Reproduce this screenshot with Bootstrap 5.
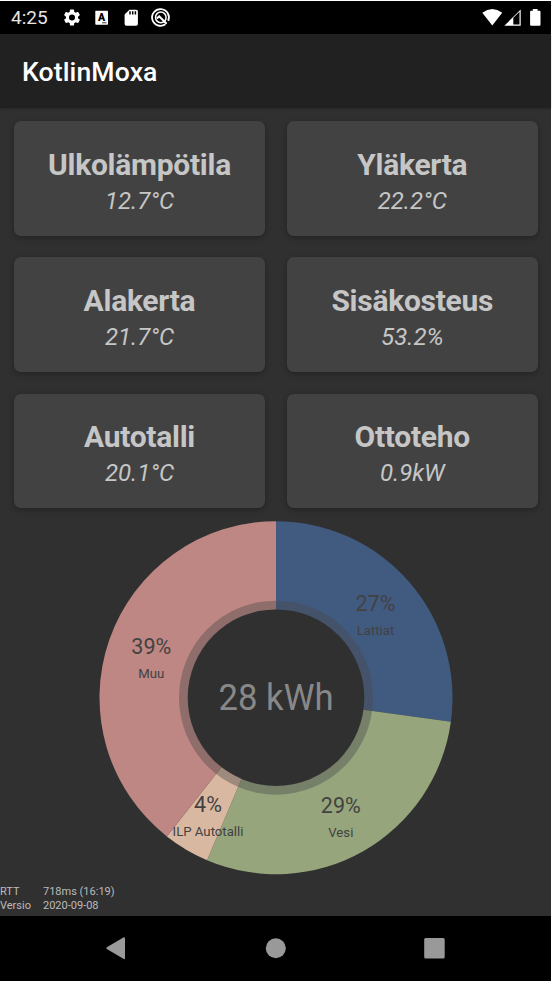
<!DOCTYPE html>
<html lang="fi">
<head>
<meta charset="utf-8">
<meta name="viewport" content="width=device-width, initial-scale=1">
<title>KotlinMoxa</title>
<link href="https://cdn.jsdelivr.net/npm/bootstrap@5.3.0/dist/css/bootstrap.min.css" rel="stylesheet">
<style>
  body { background: #fff; font-family: Roboto, sans-serif; overflow: hidden; }
  .screen { width: 551px; height: 980px; margin-top: 1px; background: #303030; }
  .status-bar { height: 33px; background: #000; color: #fff; padding-left: 11px; }
  .clock { font-size: 19px; line-height: 34px; width: 51px; color: #e6e6e6; }
  .app-bar { height: 74px; background: #212121; color: #fff; padding-left: 22px; box-shadow: 0 1px 2px rgba(0,0,0,.2); }
  .app-title { font-size: 26.6px; font-weight: 500; line-height: 76px; letter-spacing: .1px; }
  .tiles { display: grid; grid-template-columns: 251px 251px; grid-auto-rows: 114.8px; column-gap: 21.8px; row-gap: 21.4px; padding: 13.3px 0 0 14px; height: 401px; }
  .tile { background: #424242; color: #c6c6c6; border: 0; border-radius: 7px; box-shadow: 0 2px 6px rgba(0,0,0,.28); padding-top: 24.3px; }
  .tile-name { font-size: 30px; font-weight: 700; line-height: 38px; letter-spacing: -.28px; }
  .tile-value { font-size: 24px; font-style: italic; line-height: 34px; }
  .chart { height: 376px; }
  .chart text { text-anchor: middle; fill: #424242; }
  .chart .pct { font-size: 21.5px; }
  .chart .lbl { font-size: 13.2px; }
  .chart .total { font-size: 36px; fill: #888; }
  .info { font-size: 11px; line-height: 13.5px; color: #bbb; grid-template-columns: 43px auto; }
  .nav-bar { height: 65px; background: #000; }
</style>
</head>
<body>
<div class="screen d-flex flex-column">
  <header class="status-bar d-flex flex-shrink-0">
    <span class="clock">4:25</span>
    <svg width="489" height="33" viewBox="62 1 489 33" fill="#fff">
      <g transform="translate(61.9 7.4) scale(.84)"><path d="M19.14 12.94c.04-.3.06-.61.06-.94s-.02-.64-.07-.94l2.03-1.58a.5.5 0 0 0 .12-.61l-1.92-3.32a.5.5 0 0 0-.59-.22l-2.39.96a7 7 0 0 0-1.62-.94l-.36-2.54a.5.5 0 0 0-.48-.41h-3.84a.5.5 0 0 0-.47.41l-.36 2.54a7.300 7.300 0 0 0-1.620.94l-2.390-.960a.5.5 0 0 0-.590.220L2.740 8.870a.5.5 0 0 0 .120.610l2.030 1.580a6 6 0 0 0 0 1.880l-2.030 1.580a.5.5 0 0 0-.120.610l1.920 3.320c.120.220.370.290.590.220l2.390-.960c.5.380 1.030.7 1.620.940l.360 2.540c.050.240.240.410.480.410h3.840c.240 0 .440-.170.470-.410l.360-2.540a7 7 0 0 0 1.620-.940l2.390.960c.220.080.470 0 .590-.220l1.920-3.320a.5.5 0 0 0-.120-.610zM12 15.600a3.600 3.600 0 1 1 0-7.200 3.600 3.600 0 0 1 0 7.200z"/></g>
      <rect x="95.300" y="10.800" width="12.700" height="14" rx=".8"/>
      <text x="101.600" y="20.700" text-anchor="middle" font-size="10.500" font-weight="900" fill="#000">A</text>
      <path d="M102 22.800h4.500" stroke="#000" stroke-width=".8"/>
      <path d="M129.400 9.700h6.800q1.700 0 1.700 1.700v12.700q0 1.700-1.700 1.700h-9.900q-1.700 0-1.700-1.700v-9.600z"/>
      <path d="M130 11.200v3.200M132.700 11.200v3.200M135.400 11.200v3.200" stroke="#000" stroke-width="1.500"/>
      <g fill="none" stroke="#fff">
        <path d="M165.400 24.300A8.400 8.400 0 1 1 168.200 20.800" stroke-width="1.800"/>
        <circle cx="160.800" cy="17.400" r="5.300" stroke-width="1.500"/>
        <path d="M156.800 18.400l2.400-2 7.400 7.400" stroke-width="2"/>
      </g>
      <path d="M482.300 12.800Q492.300 5.400 502.200 12.800L492.300 25.500z"/>
      <path fill-rule="evenodd" d="M504.300 25.800L520.700 9.500V25.800zM513.300 17.800V24.600H519.500V11.800z"/>
      <path d="M532.800 9.100h4.800v1.600h1.900q1 0 1 1V24.800q0 1-1 1h-8.400q-1 0-1-1V11.700q0-1 1-1h1.700z"/>
    </svg>
  </header>
  <div class="app-bar flex-shrink-0"><div class="app-title">KotlinMoxa</div></div>
  <main class="flex-grow-1 d-flex flex-column">
    <section class="tiles text-center">
      <div class="card tile"><div class="tile-name">Ulkolämpötila</div><div class="tile-value">12.7°C</div></div>
      <div class="card tile"><div class="tile-name">Yläkerta</div><div class="tile-value">22.2°C</div></div>
      <div class="card tile"><div class="tile-name">Alakerta</div><div class="tile-value">21.7°C</div></div>
      <div class="card tile"><div class="tile-name">Sisäkosteus</div><div class="tile-value">53.2%</div></div>
      <div class="card tile"><div class="tile-name">Autotalli</div><div class="tile-value">20.1°C</div></div>
      <div class="card tile"><div class="tile-name">Ottoteho</div><div class="tile-value">0.9kW</div></div>
    </section>
    <svg class="chart d-block flex-shrink-0" width="551" height="376" viewBox="0 509 551 376">
      <g transform="translate(276 697.700)">
        <path fill="#415a80" d="M0 0V-176.500A176.500 176.500 0 0 1 174.870 23.950z"/>
        <path fill="#96a57c" d="M0 0L174.870 23.950A176.500 176.500 0 0 1-68.960 162.470z"/>
        <path fill="#d9b8a1" d="M0 0L-68.960 162.470A176.500 176.500 0 0 1-109.150 138.700z"/>
        <path fill="#bf8784" d="M0 0L-109.150 138.700A176.500 176.500 0 0 1 0-176.500z"/>
        <circle r="97" fill="#4b4b4b" fill-opacity=".42"/>
        <circle r="88.300" fill="#303030"/>
      </g>
      <text class="pct" x="375.500" y="611">27%</text><text class="lbl" x="375.500" y="635.300">Lattiat</text>
      <text class="pct" x="340.800" y="813.300">29%</text><text class="lbl" x="340.800" y="837.300">Vesi</text>
      <text class="pct" x="208" y="811.500">4%</text><text class="lbl" x="208" y="835.500">ILP Autotalli</text>
      <text class="pct" x="151.300" y="654.400">39%</text><text class="lbl" x="151.300" y="678.400">Muu</text>
      <text class="total" x="276" y="709.800" textLength="115" lengthAdjust="spacingAndGlyphs">28 kWh</text>
    </svg>
    <div class="info d-grid"><span>RTT</span><span>718ms (16:19)</span><span>Versio</span><span>2020-09-08</span></div>
  </main>
  <nav class="nav-bar flex-shrink-0">
    <svg class="d-block" width="551" height="65" viewBox="0 916 551 65" fill="#999">
      <path d="M106.800 947.300L123.800 937.300Q125 937 125 938.300V958.200Q125 959.500 123.800 959L106.800 949Q105.600 948.200 106.800 947.300z"/>
      <circle cx="275.800" cy="948.200" r="10"/>
      <rect x="424.200" y="938" width="20.500" height="20.600" rx="1.500"/>
    </svg>
  </nav>
</div>
<script src="https://cdn.jsdelivr.net/npm/bootstrap@5.3.0/dist/js/bootstrap.bundle.min.js"></script>
</body>
</html>
